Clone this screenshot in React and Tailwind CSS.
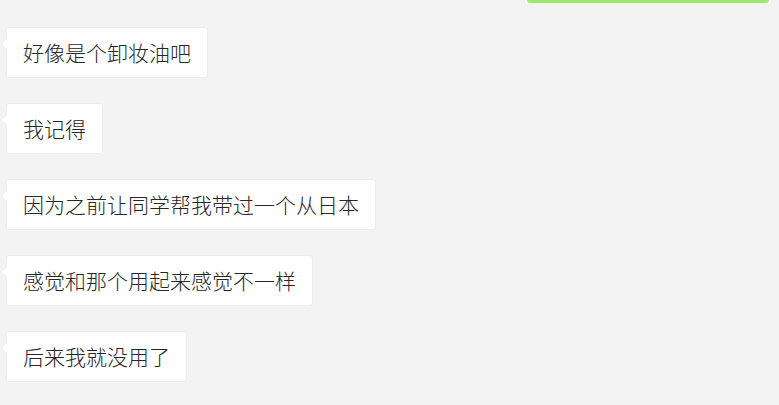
const messages = [
  '好像是个卸妆油吧',
  '我记得',
  '因为之前让同学帮我带过一个从日本',
  '感觉和那个用起来感觉不一样',
  '后来我就没用了',
];

function Bubble({ text }) {
  return (
    <div className="relative self-start bg-white border border-[#ededed] rounded-[3px] px-4 py-[11px] text-[21px] leading-[27px] font-light text-[#262626]">
      <span className="absolute -left-[5px] top-[12px] w-2 h-2 bg-white border-l border-b border-[#ededed] rotate-45" />
      {text}
    </div>
  );
}

export default function App() {
  return (
    <div
      className="w-[779px] h-[405px] bg-[#f3f3f3] overflow-hidden flex flex-col"
      style={{ fontFamily: '"Noto Sans CJK SC", "Noto Sans", sans-serif' }}
    >
      <div className="self-end mr-[10px] w-[242px] h-[3px] bg-[#9eea6a] rounded-b-[3px]" />
      <div className="flex flex-col gap-[25px] pl-[6px] pt-[24px]">
        {messages.map((m) => (
          <Bubble key={m} text={m} />
        ))}
      </div>
    </div>
  );
}
